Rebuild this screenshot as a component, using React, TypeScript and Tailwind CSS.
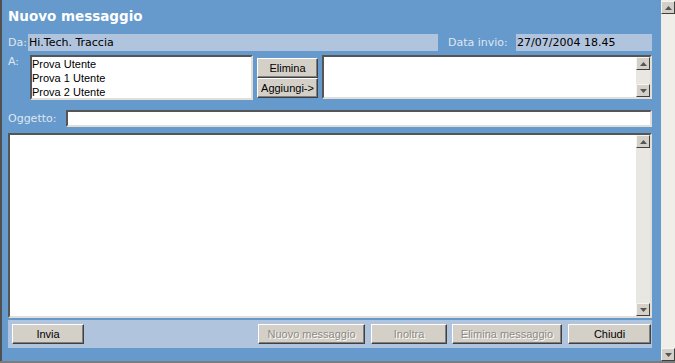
import React from "react";

const sans = "font-['Liberation_Sans',Arial,sans-serif]";

function Btn({ children, className = "", disabled = false }: any) {
  return (
    <div
      className={`${sans} ${className} flex items-center justify-center bg-[#d4d0c8] border border-t-white border-l-white border-r-[#404040] border-b-[#404040] shadow-[inset_-1px_-1px_0_#808080] text-[11px] leading-none ${
        disabled ? "text-[#8d8a84] [text-shadow:1px_1px_0_#ffffff]" : "text-black"
      }`}
    >
      {children}
    </div>
  );
}

function Arrow({ down = false }: { down?: boolean }) {
  return (
    <div className="w-[14px] h-[13px] shrink-0 flex items-center justify-center bg-[#d4d0c8] border border-t-[#f4f4f4] border-l-[#f4f4f4] border-r-[#404040] border-b-[#404040]">
      <svg width="7" height="4" viewBox="0 0 7 4">
        {down ? <path d="M0 0h7L3.5 4z" fill="#555" /> : <path d="M0 4h7L3.5 0z" fill="#555" />}
      </svg>
    </div>
  );
}

function VScroll() {
  return (
    <div className="w-[14px] flex flex-col bg-[#e9e7e1]">
      <Arrow />
      <div className="flex-1" />
      <Arrow down />
    </div>
  );
}

const inset =
  "border-2 border-t-[#555] border-l-[#555] border-b-[#e2dfd8] border-r-[#e2dfd8] bg-white";

export default function App() {
  return (
    <div className="w-[675px] h-[363px] flex flex-col overflow-hidden bg-[#6699cc] font-['DejaVu_Sans',Verdana,sans-serif]">
      <div className="flex flex-1 min-h-0">
        <div className="w-[2px] bg-[#505050]" />

        <div className="flex-1 flex flex-col pl-[6px] pr-[9px]">
          {/* title */}
          <div className="h-[34px] pt-[6px] text-[13.5px] leading-[20px] font-bold text-white">
            Nuovo messaggio
          </div>

          {/* sender + date */}
          <div className="flex h-[17px] text-[11px] leading-[17px]">
            <span className="w-[20px] text-[#dfe7f1]">Da:</span>
            <div className="w-[410px] bg-[#b0c4de] pl-[1px] text-black">Hi.Tech. Traccia</div>
            <span className="ml-[10px] w-[68px] text-[#dfe7f1]">Data invio:</span>
            <div className="flex-1 bg-[#b0c4de] pl-[1px] text-black">27/07/2004 18.45</div>
          </div>

          {/* recipients */}
          <div className="mt-[4px] flex h-[45px]">
            <span className="w-[22px] text-[11px] leading-[13px] text-[#dfe7f1]">A:</span>
            <div className={`w-[223px] ${inset} ${sans} text-[11px] leading-[14px] text-black`}>
              <div>Prova Utente</div>
              <div>Prova 1 Utente</div>
              <div>Prova 2 Utente</div>
            </div>
            <div className="ml-[4px] w-[61px] flex flex-col pt-[3px]">
              <Btn className="h-[20px]">Elimina</Btn>
              <Btn className="h-[20px]">Aggiungi-&gt;</Btn>
            </div>
            <div className={`ml-[4px] flex-1 h-[44px] ${inset} flex justify-end`}>
              <VScroll />
            </div>
          </div>

          {/* subject */}
          <div className="mt-[10px] flex h-[17px] text-[11px] leading-[17px]">
            <span className="w-[58px] text-[#dfe7f1]">Oggetto:</span>
            <div className={`flex-1 ${inset}`} />
          </div>

          {/* body */}
          <div className={`mt-[6px] h-[185px] ${inset} flex justify-end`}>
            <VScroll />
          </div>

          {/* button bar */}
          <div className="mt-[2px] h-[28px] bg-[#b0c4de] flex items-center pl-[4px] pr-[1px]">
            <Btn className="w-[72px] h-[20px]">Invia</Btn>
            <div className="ml-auto flex">
              <Btn disabled className="w-[107px] h-[20px]">Nuovo messaggio</Btn>
              <Btn disabled className="ml-[6px] w-[76px] h-[20px]">Inoltra</Btn>
              <Btn disabled className="ml-[5px] w-[110px] h-[20px]">Elimina messaggio</Btn>
              <Btn className="ml-[6px] w-[83px] h-[20px]">Chiudi</Btn>
            </div>
          </div>
        </div>

        {/* page scrollbar */}
        <div className="w-[14px] flex flex-col bg-[#efeee8] pt-[1px]">
          <Arrow />
          <div className="flex-1" />
          <Arrow down />
        </div>
      </div>
      <div className="h-[2px] bg-[#7c7c7c]" />
    </div>
  );
}
